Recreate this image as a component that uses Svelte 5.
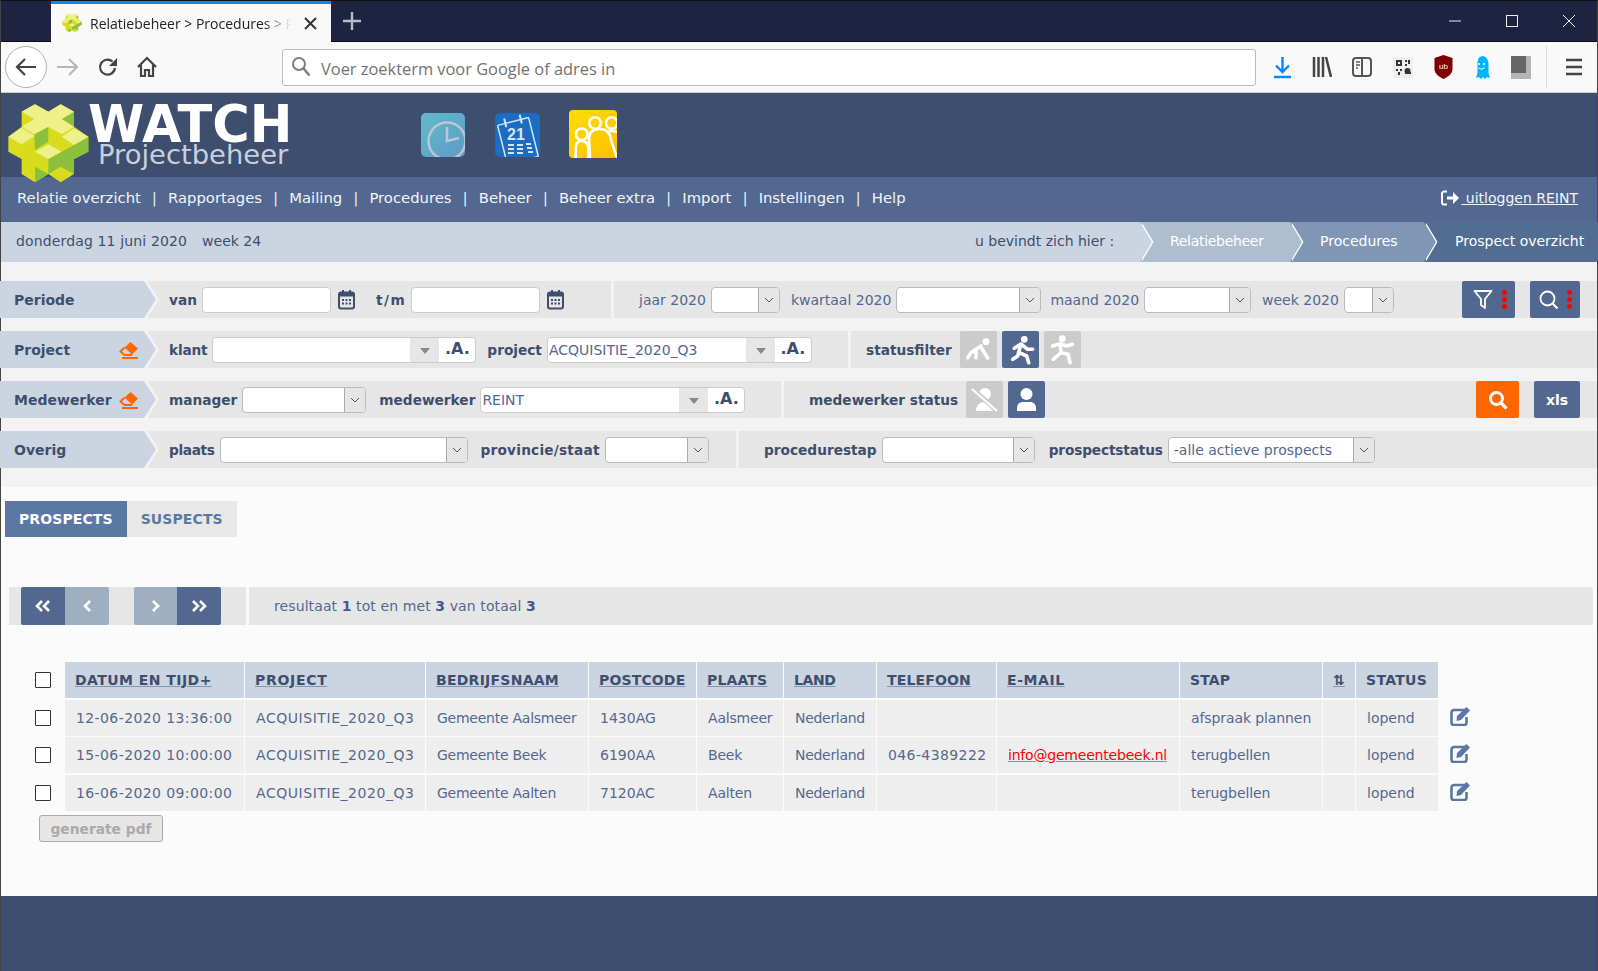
<script>
    const navItems = ['Relatie overzicht', 'Rapportages', 'Mailing', 'Procedures', 'Beheer', 'Beheer extra', 'Import', 'Instellingen', 'Help'];

    const columns = [
        { title: 'DATUM EN TIJD+', width: 180, link: true },
        { title: 'PROJECT', width: 181, link: true },
        { title: 'BEDRIJFSNAAM', width: 163, link: true },
        { title: 'POSTCODE', width: 108, link: true },
        { title: 'PLAATS', width: 87, link: true },
        { title: 'LAND', width: 93, link: true },
        { title: 'TELEFOON', width: 120, link: true },
        { title: 'E-MAIL', width: 183, link: true },
        { title: 'STAP', width: 143, link: false },
        { title: '⇅', width: 33, link: true },
        { title: 'STATUS', width: 83, link: false }
    ];

    const rows = [
        ['12-06-2020 13:36:00', 'ACQUISITIE_2020_Q3', 'Gemeente Aalsmeer', '1430AG', 'Aalsmeer', 'Nederland', '', '', 'afspraak plannen', '', 'lopend'],
        ['15-06-2020 10:00:00', 'ACQUISITIE_2020_Q3', 'Gemeente Beek', '6190AA', 'Beek', 'Nederland', '046-4389222', 'info@gemeentebeek.nl', 'terugbellen', '', 'lopend'],
        ['16-06-2020 09:00:00', 'ACQUISITIE_2020_Q3', 'Gemeente Aalten', '7120AC', 'Aalten', 'Nederland', '', '', 'terugbellen', '', 'lopend']
    ];
</script>

{#snippet arrow()}
    <span class="sel-arrow">
        <svg width="10" height="6" viewBox="0 0 10 6"><path d="M1 1l4 4 4-4" fill="none" stroke="#555" stroke-width="1"/></svg>
    </span>
{/snippet}

{#snippet calendar()}
    <svg class="cal" width="17" height="21" viewBox="0 0 17 21">
        <rect x="1" y="3.5" width="15" height="16" rx="2" fill="none" stroke="#3e4e6e" stroke-width="2"/>
        <rect x="1" y="3.5" width="15" height="4" fill="#3e4e6e"/>
        <rect x="4" y="1" width="2" height="4" fill="#3e4e6e"/>
        <rect x="11" y="1" width="2" height="4" fill="#3e4e6e"/>
        <path d="M4 10h2v2H4zM7.5 10h2v2h-2zM11 10h2v2h-2zM4 13.5h2v2H4zM7.5 13.5h2v2h-2zM11 13.5h2v2h-2z" fill="#3e4e6e"/>
    </svg>
{/snippet}

{#snippet eraser()}
    <svg class="eraser" width="20" height="18" viewBox="0 0 20 18">
        <path d="M11.500 1L19 7.500 13 13.500 5.500 6.500z" fill="#ff6600"/>
        <path d="M5.500 6.500L1.500 10.500 5.500 14H12L13 13" fill="none" stroke="#ff6600" stroke-width="2"/>
        <path d="M3 17h16" stroke="#ff6600" stroke-width="2"/>
    </svg>
{/snippet}

{#snippet combo(value, cls)}
    <div class="combo {cls}">
        <span class="combo-val">{value}</span>
        <span class="combo-arrow"></span>
        <span class="combo-a">.A.</span>
    </div>
{/snippet}

{#snippet dots()}
    <span class="dots"><i></i><i></i><i></i></span>
{/snippet}

{#snippet runIcon(kind)}
    <svg width="37" height="37" viewBox="0 0 37 37" fill="none" stroke="#fff" stroke-width="3.6" stroke-linecap="round" stroke-linejoin="round">
        {#if kind === 'crawl'}
            <circle cx="26" cy="10.700" r="3.400" fill="#fff" stroke="none"/>
            <path d="M21 15l-10 6.700-3.300 5M21 16l3.300 5.700 3.400 5.600M16 19l0 7.700"/>
        {:else if kind === 'run'}
            <circle cx="22.300" cy="8.300" r="3.400" fill="#fff" stroke="none"/>
            <path d="M19 13l-3.300 12-5 3.300M12.300 17.300L19 13l6.700 5.300h5M17.300 21.700l7.400 3.300 2 6.700"/>
        {:else}
            <circle cx="18.300" cy="7.700" r="3.400" fill="#fff" stroke="none"/>
            <path d="M8.700 15L16 12.700 22.700 15l5.600-1.700M16 12.700l1 9-7.700 6.600M17 21.700l7.300 1.600 1.700 8.400"/>
        {/if}
    </svg>
{/snippet}

<div class="page">
    <!-- browser chrome -->
    <div class="titlebar">
        <div class="tab">
            <svg class="favicon" width="20" height="20" viewBox="20 25 250 240">
                <path d="M105 28l40 22 37-22 40 22v45l43 30v45l-43 22v45l-40 25-37-25-40 25-40-25v-45l-40-22v-45l40-30V50z" fill="#d9dc1c"/>
                <path d="M222 50v45l-37-23zM103 118l42-23v45l-40 25zM145 192l77-42 43-25v45l-43 22v45l-40-22-37 22zM105 215l40 22-40 25z" fill="#8cc03c"/>
                <path d="M105 28l40 22 37-22 40 22-37 22 37 23-37 23-40-23-42 23-38-23 38-23-38-22zM65 98l38 24v2l-38 24-40-23zM222 100l43 25-43 25-37-25zM145 148l40 22-40 22-40-22z" fill="#eef08a"/>
            </svg>
            <span class="tab-title">Relatiebeheer &gt; Procedures &gt; Prospect</span>
            <svg width="13" height="13" viewBox="0 0 13 13"><path d="M1 1l11 11M12 1L1 12" stroke="#333" stroke-width="2"/></svg>
        </div>
        <svg class="plus" width="18" height="18" viewBox="0 0 18 18"><path d="M9 0v18M0 9h18" stroke="#b9bbc6" stroke-width="2.400"/></svg>
        <div class="winctl">
            <svg width="14" height="14" viewBox="0 0 14 14"><path d="M1 7h12" stroke="#eee" stroke-width="1"/></svg>
            <svg width="14" height="14" viewBox="0 0 14 14"><rect x="1.500" y="1.500" width="11" height="11" fill="none" stroke="#eee"/></svg>
            <svg width="14" height="14" viewBox="0 0 14 14"><path d="M1 1l12 12M13 1L1 13" stroke="#eee"/></svg>
        </div>
    </div>
    <div class="toolbar">
        <div class="backbtn">
            <svg width="22" height="20" viewBox="0 0 22 20"><path d="M21 10H3M10 2l-8 8 8 8" fill="none" stroke="#444" stroke-width="2.200"/></svg>
        </div>
        <svg class="fwd" width="21" height="18" viewBox="0 0 21 18"><path d="M0 9h19M12 1l8 8-8 8" fill="none" stroke="#b5b5b5" stroke-width="2"/></svg>
        <svg class="reload" width="20" height="20" viewBox="0 0 20 20"><path d="M17 11a7.500 7.500 0 1 1-2.500-6.500" fill="none" stroke="#444" stroke-width="2.200"/><path d="M19 1v8h-8z" fill="#444"/></svg>
        <svg class="home" width="20" height="22" viewBox="0 0 20 22"><path d="M1 11l9-9 9 9M4 9v11h4v-6h4v6h4V9" fill="none" stroke="#444" stroke-width="2.200"/></svg>
        <div class="urlbar">
            <svg width="20" height="22" viewBox="0 0 20 22"><circle cx="8" cy="8" r="6" fill="none" stroke="#7d7d7d" stroke-width="2"/><path d="M12.500 12.500l6 7" stroke="#7d7d7d" stroke-width="2.500"/></svg>
            <span>Voer zoekterm voor Google of adres in</span>
        </div>
        <div class="tools">
            <svg width="17" height="23" viewBox="0 0 17 23"><path d="M8.500 1v14M2 9.500l6.500 6.500 6.500-6.500" fill="none" stroke="#0a84ff" stroke-width="2.400"/><path d="M0 21h17" stroke="#0a84ff" stroke-width="2.400"/></svg>
            <svg width="20" height="20" viewBox="0 0 20 20"><path d="M2 0v20M6.500 0v20M11 0v20" stroke="#444" stroke-width="2.500"/><path d="M14 0l5 20" stroke="#444" stroke-width="2.500"/></svg>
            <svg width="20" height="20" viewBox="0 0 20 20"><rect x="1" y="1" width="18" height="18" rx="3" fill="none" stroke="#555" stroke-width="2"/><path d="M10 1v18" stroke="#555" stroke-width="2"/><path d="M4 5h4M4 8h4M4 11h2" stroke="#555" stroke-width="1.500"/></svg>
            <svg width="20" height="21" viewBox="0 0 20 21"><rect width="20" height="21" fill="#eee"/><path d="M3 3h6v6H3zM12 3h2v2h-2zM15 3h2v4h-2zM12 7h2v2h-2zM3 12h2v2H3zM7 12h2v2H7zM5 15h2v3H5zM12 17h6v-2h-3v-3h-2z" fill="#333"/><rect x="5" y="5" width="2" height="2" fill="#eee"/><circle cx="14.500" cy="14" r="3" fill="#333"/></svg>
            <svg width="19" height="24" viewBox="0 0 19 24"><path d="M9.500 0l9 3v11c0 5-5 8-9 10-4-2-9-5-9-10V3z" fill="#800000"/><text x="9.500" y="14" text-anchor="middle" font-size="8" font-family="'Liberation Sans', sans-serif" fill="#fff">ub</text></svg>
            <svg width="17" height="23" viewBox="0 0 17 23"><path d="M8.500 0c5 0 7 4 7 8v9l1.500 5-3-1-2 2-2-2-2 2-2-2-3 1 1.500-5V8c0-4 1-8 6-8z" fill="#00b3ff"/><circle cx="6" cy="8" r="1" fill="#fff"/><circle cx="11" cy="8" r="1" fill="#fff"/><path d="M5.500 12q3 2.500 6 0" fill="none" stroke="#fff"/></svg>
            <svg width="20" height="23" viewBox="0 0 20 23"><rect width="20" height="23" fill="#b5b5b5"/><rect width="15" height="17" fill="#666"/></svg>
            <span class="tool-div"></span>
            <svg width="16" height="18" viewBox="0 0 16 18"><path d="M0 2h16M0 9h16M0 16h16" stroke="#444" stroke-width="2.500"/></svg>
        </div>
    </div>

    <!-- app header -->
    <header class="app-header">
        <svg class="logo" width="110" height="95" viewBox="0 0 330 285">
            <path d="M105 28l40 22 37-22 40 22v45l43 30v45l-43 22v45l-40 25-37-25-40 25-40-25v-45l-40-22v-45l40-30V50z" fill="#d9dc1c"/>
            <path d="M222 50v45l-37-23zM103 118l42-23v45l-40 25zM145 192l77-42 43-25v45l-43 22v45l-40-22-37 22zM105 215l40 22-40 25z" fill="#8cc03c"/>
            <path d="M105 28l40 22 37-22 40 22-37 22 37 23-37 23-40-23-42 23-38-23 38-23-38-22zM65 98l38 24v2l-38 24-40-23zM222 100l43 25-43 25-37-25zM145 148l40 22-40 22-40-22z" fill="#eef08a"/>
        </svg>
        <div class="brand">
            <span class="brand-watch">WATCH</span>
            <span class="brand-sub">Projectbeheer</span>
        </div>
        <div class="tiles">
            <svg class="tile" width="44" height="44" viewBox="0 0 44 44">
                <defs><linearGradient id="t1" x1="0" y1="0" x2="1" y2="1"><stop offset="0" stop-color="#5fbccb"/><stop offset="1" stop-color="#5f9ac6"/></linearGradient></defs>
                <rect width="44" height="44" rx="5" fill="url(#t1)"/>
                <circle cx="26" cy="28" r="18.500" fill="none" stroke="#bcc6d4" stroke-width="2.500"/>
                <path d="M26 14v14l12-3" fill="none" stroke="#bcc6d4" stroke-width="2.500"/>
            </svg>
            <svg class="tile t2" width="45" height="44" viewBox="0 0 45 44">
                <rect width="45" height="44" rx="5" fill="#1a6cc4"/>
                <g transform="rotate(-14 22 24)" fill="none" stroke="#d5e4f5" stroke-width="1.500">
                    <rect x="6" y="8" width="32" height="40" rx="1"/>
                    <path d="M14 3v9M30 3v9" stroke-width="2"/>
                </g>
                <text x="21" y="27" text-anchor="middle" font-size="16" font-weight="700" font-family="'Liberation Sans', sans-serif" fill="#d5e4f5">21</text>
                <path d="M13 32h6M13 36h6M13 40h6M22 32h6M22 36h6M22 40h6M31 31h5M32 35h5M33 39h5" stroke="#d5e4f5" stroke-width="2"/>
            </svg>
            <svg class="tile t3" width="48" height="48" viewBox="0 0 48 48">
                <defs><linearGradient id="t3" x1="0" y1="0" x2="1" y2="1"><stop offset="0" stop-color="#ffdd00"/><stop offset="1" stop-color="#fdbf00"/></linearGradient></defs>
                <rect width="48" height="48" rx="4" fill="url(#t3)"/>
                <g fill="none" stroke="#fff" stroke-width="2.600">
                    <circle cx="12.700" cy="24.300" r="5.800"/><circle cx="26" cy="13" r="5.800"/><circle cx="42.700" cy="13" r="5.800"/>
                    <path d="M6.700 48V38q0-7 6-7t6.600 7v10M21 48l-1-18q0-11 10.500-11t11.500 11l6 18M38 22q5-2 10 0"/>
                </g>
            </svg>
        </div>
    </header>

    <nav class="mainnav">
        {#each navItems as item, i}
            {#if i > 0}<span class="sep">|</span>{/if}
            <span>{item}</span>
        {/each}
        <span class="logout">
            <svg width="19" height="16" viewBox="0 0 19 16"><path d="M6 1.500H3a2 2 0 0 0-2 2v9a2 2 0 0 0 2 2h3" fill="none" stroke="#fff" stroke-width="2"/><path d="M6 6.500h6V2l6 6-6 6V9.500H6z" fill="#fff"/></svg>
            <u>&nbsp;uitloggen REINT</u>
        </span>
    </nav>

    <div class="crumbbar">
        <span class="today">donderdag 11 juni 2020</span>
        <span class="weeknr">week 24</span>
        <div class="crumbs">
            <span class="crumb c0">u bevindt zich hier :</span>
            <span class="crumb c1">Relatiebeheer</span>
            <span class="crumb c2">Procedures</span>
            <span class="crumb c3">Prospect overzicht</span>
        </div>
    </div>

    <!-- filters -->
    <section class="filters">
        <div class="frow">
            <div class="flabel">Periode</div>
            <div class="seg s-periode">
                <b>van</b>
                <input class="fld w-date" />
                {@render calendar()}
                <b class="ml-tm">t/m</b>
                <input class="fld w-date" />
                {@render calendar()}
            </div>
            <div class="seg grow s-jaar">
                <span>jaar 2020</span>
                <div class="sel w-jaar">{@render arrow()}</div>
                <span class="ml">kwartaal 2020</span>
                <div class="sel w-kwartaal">{@render arrow()}</div>
                <span class="ml-tight">maand 2020</span>
                <div class="sel w-maand">{@render arrow()}</div>
                <span class="ml">week 2020</span>
                <div class="sel w-week">{@render arrow()}</div>
                <div class="actions">
                    <div class="act a-filter">
                        <svg width="20" height="22" viewBox="0 0 20 22"><path d="M1.500 2h17l-6.500 8v9l-4-3v-6z" fill="none" stroke="#fff" stroke-width="1.800" stroke-linejoin="round"/></svg>
                        {@render dots()}
                    </div>
                    <div class="act a-search">
                        <svg width="20" height="20" viewBox="0 0 20 20"><circle cx="8.500" cy="8.500" r="7" fill="none" stroke="#fff" stroke-width="1.800"/><path d="M13.500 13.500l5 5" stroke="#fff" stroke-width="2"/></svg>
                        {@render dots()}
                    </div>
                </div>
            </div>
        </div>

        <div class="frow">
            <div class="flabel">Project {@render eraser()}</div>
            <div class="seg s-project">
                <b class="sp-klant">klant</b>
                {@render combo('', 'w-klant')}
                <b class="ml">project</b>
                {@render combo('ACQUISITIE_2020_Q3', 'w-mw')}
            </div>
            <div class="seg grow s-status">
                <b>statusfilter</b>
                <div class="statbtns">
                    <span class="stat">{@render runIcon('crawl')}</span>
                    <span class="stat on">{@render runIcon('run')}</span>
                    <span class="stat">{@render runIcon('kick')}</span>
                </div>
            </div>
        </div>

        <div class="frow">
            <div class="flabel">Medewerker {@render eraser()}</div>
            <div class="seg s-mw">
                <b>manager</b>
                <div class="sel w-manager">{@render arrow()}</div>
                <b class="ml-wide">medewerker</b>
                {@render combo('REINT', 'w-mw')}
            </div>
            <div class="seg grow s-mwstatus">
                <b>medewerker status</b>
                <div class="statbtns">
                    <span class="stat">
                        <svg width="37" height="37" viewBox="0 0 37 37">
                            <circle cx="19" cy="13" r="6" fill="#fff"/>
                            <path d="M10 30c0-6 4-9 9-9s9 3 9 9z" fill="#fff"/>
                            <path d="M6 7l25 23" stroke="#cbcbcb" stroke-width="5"/>
                            <path d="M6 8l25 22" stroke="#fff" stroke-width="2"/>
                        </svg>
                    </span>
                    <span class="stat on">
                        <svg width="37" height="37" viewBox="0 0 37 37">
                            <circle cx="18.500" cy="13" r="6" fill="#fff"/>
                            <path d="M9 30v-3c0-4 3-6 6-6h7c3 0 6 2 6 6v3z" fill="#fff"/>
                        </svg>
                    </span>
                </div>
                <div class="actions">
                    <div class="act a-go">
                        <svg width="20" height="20" viewBox="0 0 20 20"><circle cx="8.500" cy="8.500" r="6" fill="none" stroke="#fff" stroke-width="3"/><path d="M13 13l5.500 5.500" stroke="#fff" stroke-width="3.200"/></svg>
                    </div>
                    <div class="act a-xls">xls</div>
                </div>
            </div>
        </div>

        <div class="frow">
            <div class="flabel">Overig</div>
            <div class="seg s-overig">
                <b class="sp-plaats">plaats</b>
                <div class="sel w-plaats">{@render arrow()}</div>
                <b class="ml-wide sp-prov">provincie/staat</b>
                <div class="sel w-prov">{@render arrow()}</div>
            </div>
            <div class="seg grow s-proc">
                <b>procedurestap</b>
                <div class="sel w-proc">{@render arrow()}</div>
                <b class="sp-pstat">prospectstatus</b>
                <div class="sel w-pstatus"><span class="sel-val">-alle actieve prospects</span>{@render arrow()}</div>
            </div>
        </div>
    </section>

    <main class="content">
        <div class="tabs">
            <span class="ptab active">PROSPECTS</span>
            <span class="ptab">SUSPECTS</span>
        </div>

        <div class="pager">
            <div class="pager-left">
                <span class="pg dark first">
                    <svg width="16" height="12" viewBox="0 0 16 12"><path d="M7 1L2 6l5 5M14 1L9 6l5 5" fill="none" stroke="#fff" stroke-width="2.600"/></svg>
                </span>
                <span class="pg light last">
                    <svg width="9" height="12" viewBox="0 0 9 12"><path d="M7 1L2 6l5 5" fill="none" stroke="#fff" stroke-width="2.600"/></svg>
                </span>
                <span class="pg light first gapl">
                    <svg width="9" height="12" viewBox="0 0 9 12"><path d="M2 1l5 5-5 5" fill="none" stroke="#fff" stroke-width="2.600"/></svg>
                </span>
                <span class="pg dark last">
                    <svg width="16" height="12" viewBox="0 0 16 12"><path d="M2 1l5 5-5 5M9 1l5 5-5 5" fill="none" stroke="#fff" stroke-width="2.600"/></svg>
                </span>
            </div>
            <div class="pager-info">resultaat <b>1</b> tot en met <b>3</b> van totaal <b>3</b></div>
        </div>

        <table class="grid">
            <colgroup>
                <col class="col-check" />
                {#each columns as col}
                    <col width={col.width} />
                {/each}
                <col class="col-edit" />
            </colgroup>
            <thead>
                <tr>
                    <td class="check"><input type="checkbox" /></td>
                    {#each columns as col, h}
                        <th class="h{h}">{#if col.link}<u>{col.title}</u>{:else}{col.title}{/if}</th>
                    {/each}
                    <td class="edit"></td>
                </tr>
            </thead>
            <tbody>
                {#each rows as row}
                    <tr>
                        <td class="check"><input type="checkbox" /></td>
                        {#each row as cell, c}
                            {#if c === 7 && cell}
                                <td class="data c{c}"><u class="mail">{cell}</u></td>
                            {:else}
                                <td class="data c{c}">{cell}</td>
                            {/if}
                        {/each}
                        <td class="edit">
                            <svg width="22" height="20" viewBox="0 0 22 20">
                                <path d="M15 4H4a2.500 2.500 0 0 0-2.500 2.500v10A2.500 2.500 0 0 0 4 19h10a2.500 2.500 0 0 0 2.500-2.500V11" fill="none" stroke="#5b78a5" stroke-width="2.600"/>
                                <path d="M7 10L16.500 1 20 4.500 11 14l-4.500 1z" fill="#5b78a5"/>
                            </svg>
                        </td>
                    </tr>
                {/each}
            </tbody>
        </table>

        <button class="pdf">generate pdf</button>
    </main>

    <footer class="app-footer"></footer>
</div>

<style>
    :global(body) {
        margin: 0;
        background: #3e4e6e;
    }

    .page {
        position: relative;
        width: 1598px;
        height: 971px;
        overflow: hidden;
        display: flex;
        flex-direction: column;
        font-family: "DejaVu Sans", Verdana, sans-serif;
        font-size: 14px;
        color: #536891;
    }

    .page::after {
        content: "";
        position: absolute;
        inset: 0;
        border-left: 1px solid #444;
        border-right: 1px solid #444;
        border-top: 1px solid #111;
        pointer-events: none;
    }

    /* browser chrome */
    .titlebar {
        height: 42px;
        background: #1f2342;
        display: flex;
        box-sizing: border-box;
        padding-left: 51px;
        padding-top: 1px;
        border-bottom: 1px solid #0c0c18;
    }

    .tab {
        width: 280px;
        height: 41px;
        box-sizing: border-box;
        background: #f9f9fa;
        border-top: 3px solid #0a84ff;
        display: flex;
        align-items: center;
        padding: 0 14px 0 11px;
        font-family: "Open Sans", sans-serif;
        font-size: 14px;
        color: #222;
    }

    .favicon { flex: none; }

    .tab-title {
        flex: 1;
        margin: 0 8px 0 8px;
        white-space: nowrap;
        overflow: hidden;
        -webkit-mask-image: linear-gradient(to right, #000 84%, transparent 98%);
        mask-image: linear-gradient(to right, #000 84%, transparent 98%);
    }

    .plus {
        margin: 11px 0 0 12px;
    }

    .winctl {
        margin-left: auto;
        display: flex;
        gap: 43px;
        padding: 13px 22px 0 0;
    }

    .toolbar {
        height: 51px;
        box-sizing: border-box;
        background: #f9f9fa;
        border-bottom: 1px solid #ccc;
        display: flex;
        align-items: center;
    }

    .backbtn {
        width: 40px;
        height: 40px;
        margin-left: 5px;
        border: 1px solid #b1b1b1;
        border-radius: 50%;
        background: #fff;
        display: flex;
        align-items: center;
        justify-content: center;
    }

    .fwd { margin-left: 10px; }
    .reload { margin-left: 20px; }
    .home { margin-left: 19px; }

    .urlbar {
        width: 974px;
        height: 37px;
        box-sizing: border-box;
        margin-left: 125px;
        background: #fff;
        border: 1px solid #bbb;
        border-radius: 3px;
        display: flex;
        align-items: center;
        padding-left: 8px;
        gap: 10px;
        font-family: "Open Sans", sans-serif;
        font-size: 16.4px;
        color: #727272;
    }

    .urlbar span { padding-top: 3px; }

    .tools {
        flex: 1;
        display: flex;
        align-items: center;
        padding-left: 18px;
        gap: 20.7px;
    }

    .tool-div {
        width: 1px;
        height: 42px;
        background: #ddd;
        margin: 0 -2px 0 -6px;
    }

    /* header */
    .app-header {
        position: relative;
        height: 84px;
        background: #3e4e6e;
        display: flex;
    }

    .logo {
        position: absolute;
        left: 0;
        top: 2px;
        z-index: 2;
    }

    .brand {
        width: 200px;
        margin-left: 88px;
        display: flex;
        flex-direction: column;
        color: #fff;
    }

    .brand-watch {
        font-size: 51px;
        font-weight: 700;
        line-height: 36px;
        margin-top: 14px;
        font-family: "DejaVu Sans", sans-serif;
    }

    .brand-sub {
        font-size: 27.4px;
        line-height: 24px;
        margin-left: 10px;
        color: #c6d0de;
        white-space: nowrap;
    }

    .tiles {
        display: flex;
        align-items: flex-start;
        margin-left: 133px;
        padding-top: 20px;
    }

    .t2 { margin-left: 30px; }
    .t3 { margin-left: 29px; margin-top: -3px; }

    .mainnav {
        height: 45px;
        box-sizing: border-box;
        background: #536891;
        display: flex;
        align-items: center;
        padding: 0 20px 4px 17px;
        font-size: 14.8px;
        color: #f2f4f8;
    }

    .sep {
        margin: 0 11.25px;
        font-size: 14px;
    }

    .logout {
        margin-left: auto;
        display: flex;
        align-items: center;
        gap: 1px;
        font-size: 14px;
    }

    .crumbbar {
        height: 40px;
        background: #cbd5e1;
        display: flex;
        align-items: center;
        padding-left: 16px;
        color: #3e4e6e;
    }

    .today { letter-spacing: 0.14px; margin-bottom: 2px; }
    .weeknr { margin-left: 15px; margin-bottom: 2px; }

    .crumbs {
        margin-left: auto;
        display: flex;
        height: 100%;
    }

    .crumb {
        position: relative;
        display: flex;
        align-items: center;
        box-sizing: content-box;
        padding-bottom: 2px;
        height: 38px;
        color: #fff;
    }

    .crumb.c0 { width: 165px; padding-left: 0; color: #3e4e6e; background: #cbd5e1; z-index: 4; }
    .crumb.c1 { width: 120px; padding-left: 30px; background: #aebdd0; z-index: 3; letter-spacing: -0.3px; }
    .crumb.c2 { width: 104px; padding-left: 30px; background: #7f97b5; z-index: 2; }
    .crumb.c3 { width: 143px; padding-left: 31px; background: #536d92; z-index: 1; }

    .crumb::before,
    .crumb::after {
        content: "";
        position: absolute;
        top: 0;
        width: 12px;
        height: 100%;
        clip-path: polygon(0 0, 100% 50%, 0 100%);
    }

    .crumb::before { left: calc(100% + 1.5px); background: #fff; }
    .crumb::after { left: 100%; background: inherit; }
    .crumb.c3::before, .crumb.c3::after { display: none; }

    /* filter rows */
    .filters {
        height: 225px;
        box-sizing: border-box;
        background: #f3f3f3;
        padding-top: 19px;
        display: flex;
        flex-direction: column;
        gap: 13px;
    }

    .frow {
        height: 37px;
        display: flex;
    }

    .flabel {
        position: relative;
        z-index: 1;
        width: 130px;
        padding-left: 14px;
        background: #cbd5e1;
        color: #3e4e6e;
        font-weight: 700;
        display: flex;
        align-items: center;
        justify-content: space-between;
        flex: none;
    }

    .flabel::before,
    .flabel::after {
        content: "";
        position: absolute;
        top: 0;
        width: 12px;
        height: 100%;
        clip-path: polygon(0 0, 100% 50%, 0 100%);
    }

    .flabel::before { left: calc(100% + 3px); background: #f3f3f3; }
    .flabel::after { left: 100%; background: #cbd5e1; }

    .eraser { margin-right: 5px; }

    .seg {
        background: #e6e6e6;
        display: flex;
        align-items: center;
        gap: 5px;
        padding-left: 21px;
        margin-left: 3px;
        box-sizing: border-box;
        white-space: nowrap;
    }

    .frow > .flabel + .seg { margin-left: 4px; }
    .grow { flex: 1; }

    .s-periode { width: 463px; }
    .s-jaar { padding-left: 25px; }
    .s-project { width: 700px; }
    .s-status { padding-left: 15px; }
    .s-mw { width: 633px; }
    .s-mwstatus { padding-left: 25px; }
    .s-overig { width: 588px; }
    .s-proc { padding-left: 25px; }

    .seg b {
        color: #3e4e6e;
        font-size: 13.7px;
    }

    .ml { margin-left: 6px; }
    .ml-tight { margin-left: 4px; }
    .ml-wide { margin-left: 8px; }
    .ml-tm { margin-left: 16px; letter-spacing: 1.5px; }
    .cal { margin-left: 2px; }

    .seg .sp-klant { letter-spacing: -0.2px; }
    .seg .sp-plaats { letter-spacing: -0.35px; }
    .seg .sp-prov { letter-spacing: 0.2px; }
    .seg .sp-pstat { margin-left: 9px; letter-spacing: -0.15px; }

    .fld {
        height: 26px;
        box-sizing: border-box;
        border: 1px solid #ccc;
        border-radius: 4px;
        background: #fff;
        padding: 0;
    }

    .w-date { width: 129px; }

    .sel {
        height: 26px;
        box-sizing: border-box;
        border: 1px solid #bbb;
        border-radius: 4px;
        background: #fff;
        display: flex;
        justify-content: flex-end;
        flex: none;
        overflow: hidden;
    }

    .sel-arrow {
        width: 20px;
        background: #e6e6e6;
        border-left: 1px solid #aaa;
        display: flex;
        align-items: center;
        justify-content: center;
    }

    .sel-val {
        flex: 1;
        padding-left: 5px;
        line-height: 24px;
        color: #536891;
    }

    .w-jaar { width: 69px; }
    .w-kwartaal { width: 145px; }
    .w-maand { width: 107px; }
    .w-week { width: 50px; }
    .w-manager { width: 124px; }
    .w-plaats { width: 248px; }
    .w-prov { width: 104px; }
    .w-proc { width: 153px; }
    .w-pstatus { width: 207px; }

    .combo {
        height: 26px;
        box-sizing: border-box;
        border: 1px solid #ccc;
        border-radius: 4px;
        background: #fff;
        display: flex;
        flex: none;
        overflow: hidden;
    }

    .w-klant { width: 264px; }
    .w-mw { width: 265px; }

    .combo-val {
        flex: 1;
        line-height: 24px;
        padding-left: 1px;
        color: #536891;
    }

    .combo-arrow {
        width: 29px;
        background: #e6e6e6;
        position: relative;
    }

    .combo-arrow::after {
        content: "";
        position: absolute;
        left: 10px;
        top: 10px;
        border-left: 5px solid transparent;
        border-right: 5px solid transparent;
        border-top: 6px solid #888;
    }

    .combo-a {
        width: 36px;
        text-align: center;
        font-weight: 700;
        font-size: 16px;
        line-height: 22px;
        color: #3e4e6e;
    }

    .statbtns {
        display: flex;
        gap: 5px;
        margin-left: 3px;
    }

    .stat {
        width: 37px;
        height: 37px;
        background: #cbcbcb;
        border-radius: 2px;
    }

    .stat.on { background: #536891; }

    .actions {
        margin-left: auto;
        display: flex;
        gap: 15px;
        height: 37px;
        padding-right: 18px;
    }

    .act {
        display: flex;
        align-items: center;
        justify-content: center;
        gap: 9px;
        border-radius: 2px;
        background: #536891;
        color: #fff;
        font-weight: 700;
    }

    .a-filter { width: 53px; padding-left: 3px; box-sizing: border-box; }
    .a-search { width: 50px; gap: 8px; }
    .a-go { width: 43px; background: #ff6600; }
    .a-xls { width: 46px; font-size: 14px; }

    .dots {
        display: flex;
        flex-direction: column;
        gap: 2px;
    }

    .dots i {
        width: 5px;
        height: 5px;
        border-radius: 50%;
        background: #f00;
    }

    /* results */
    .content {
        flex: 1;
        background: #fbfbfb;
    }

    .tabs {
        display: flex;
        margin: 14px 0 0 5px;
    }

    .ptab {
        height: 36px;
        line-height: 36px;
        padding: 0 14px;
        font-weight: 700;
        letter-spacing: 0.1px;
        background: #e8e8e8;
        color: #5b78a5;
    }

    .ptab.active {
        background: #5b78a5;
        color: #fff;
    }

    .pager {
        display: flex;
        gap: 3px;
        height: 38px;
        margin: 50px 5px 0 9px;
    }

    .pager-left {
        width: 237px;
        box-sizing: border-box;
        background: #e6e6e6;
        display: flex;
        padding-left: 12px;
    }

    .pg {
        width: 44px;
        display: flex;
        align-items: center;
        justify-content: center;
    }

    .pg.dark { background: #536891; }
    .pg.light { background: #9dafc1; }
    .pg.first { border-radius: 2px 0 0 2px; }
    .pg.last { border-radius: 0 2px 2px 0; }
    .pg.gapl { margin-left: 25px; width: 43px; }

    .pager-info {
        flex: 1;
        background: #e6e6e6;
        line-height: 38px;
        padding-left: 25px;
        letter-spacing: 0.1px;
    }

    .pager-info b { color: #46598a; font-weight: 700; }

    .grid {
        table-layout: fixed;
        border-collapse: separate;
        border-spacing: 0;
        width: 1436px;
        margin: 37px 0 0 30px;
    }

    .col-check { width: 35px; }
    .col-edit { width: 27px; }

    .grid th {
        height: 36px;
        padding: 0 0 0 10px;
        background: #cbd5e1;
        color: #3e4e6e;
        text-align: left;
        font-size: 14px;
        letter-spacing: 0.15px;
        border-right: 1px solid #fbfbfb;
        border-bottom: 2px solid #fbfbfb;
        overflow: hidden;
        white-space: nowrap;
    }

    .grid th u { text-decoration-color: #7f97b5; }

    .grid th.h0 { letter-spacing: 0.45px; }
    .grid th.h1 { letter-spacing: 0.7px; }
    .grid th.h2 { letter-spacing: 0.25px; }
    .grid th.h5 { letter-spacing: -0.4px; }
    .grid th.h7 { letter-spacing: 0.6px; }
    .grid th.h10 { letter-spacing: 0.3px; }

    .data {
        height: 36px;
        padding: 0 0 0 11px;
        background: #eee;
        border-right: 1px solid #fbfbfb;
        border-bottom: 1px solid #fbfbfb;
        white-space: nowrap;
        overflow: hidden;
    }

    .data.c0 { letter-spacing: 0.4px; }
    .data.c1 { letter-spacing: 0.55px; }
    .data.c2 { letter-spacing: -0.25px; }
    .data.c4 { letter-spacing: -0.2px; }
    .data.c5 { letter-spacing: -0.3px; }
    .data.c6 { letter-spacing: 0.4px; }
    .data.c7 { letter-spacing: -0.2px; }
    .data.c8 { letter-spacing: -0.1px; }

    tbody tr:nth-child(2) .data { border-bottom-width: 2px; }

    .check { padding: 0 0 2px 5px; }

    .check input {
        appearance: none;
        display: block;
        width: 16px;
        height: 16px;
        margin: 0;
        background: #fff;
        border: 1.5px solid #333;
        border-radius: 1px;
    }

    .edit { padding: 0 0 6px 11px; }
    .edit svg { display: block; }
    .mail { color: #f00; text-decoration-color: #7f97b5; }

    .pdf {
        display: block;
        margin: 3px 0 0 39px;
        width: 124px;
        height: 27px;
        padding: 0;
        background: #e6e6e6;
        border: 1px solid #aaa;
        border-radius: 3px;
        color: #aaa;
        font-family: inherit;
        font-size: 13.8px;
        font-weight: 700;
    }

    .app-footer {
        height: 75px;
        background: #3e4e6e;
    }
</style>
